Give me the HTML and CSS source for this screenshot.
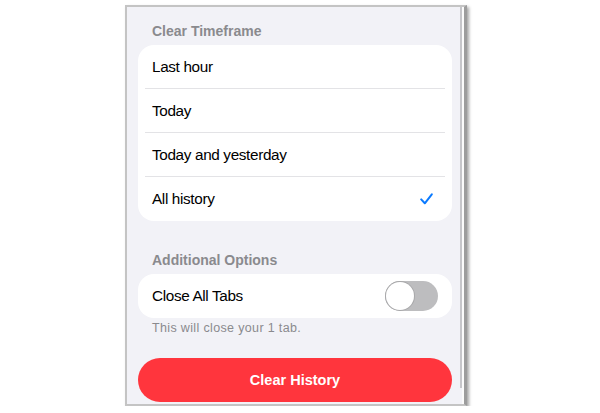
FILE: index.html
```html
<!DOCTYPE html>
<html lang="en">
<head>
    <meta charset="UTF-8">
    <title>Clear History</title>
    <link rel="stylesheet" href="styles.css">
</head>

<body>
    <!-- phone frame -->
    <div class="frame">
        <div class="screen">
            <!-- time range list -->
            <h3 class="section-title first">Clear Timeframe</h3>
            <ul class="group">
                <li class="row">Last hour</li>
                <li class="row">Today</li>
                <li class="row">Today and yesterday</li>
                <li class="row">
                    <span>All history</span>
                    <svg class="check" width="13" height="12" viewBox="0 0 13 12">
                        <polyline points="1.2,6.4 4.8,10.3 11.8,1.4" fill="none" stroke="#0a7aff" stroke-width="2" stroke-linecap="round" stroke-linejoin="round"/>
                    </svg>
                </li>
            </ul>

            <!-- extra options -->
            <h3 class="section-title">Additional Options</h3>
            <ul class="group">
                <li class="row">
                    <span>Close All Tabs</span>
                    <span class="toggle"><span class="knob"></span></span>
                </li>
            </ul>
            <p class="footnote">This will close your 1 tab.</p>

            <button type="button" class="clear-btn">Clear History</button>

            <span class="scroll-bar"></span>
        </div>
    </div>
</body>

</html>
```

FILE: styles.css
```css
/* page */
body {
    margin: 0;
    background-color: #ffffff;
    font-family: "Liberation Sans", Arial, sans-serif;
}

/* phone frame */
.frame {
    width: 335px;
    margin: 5px 0 0 125px;
    padding-right: 2px;
    background-color: #fbfbfb;
    border: 2px solid #c4c4c4;
    border-right: 3px solid #9d9d9d;
    box-shadow: 2px 2px 3px rgba(0, 0, 0, 0.35);
}

.screen {
    position: relative;
    height: 397px;
    padding: 0 10px 0 11px;
    background-color: #f2f2f7;
}

.scroll-bar {
    position: absolute;
    top: 0;
    right: 0;
    width: 2px;
    height: 381px;
    background-color: #c6c6ca;
}

/* section headers */
.section-title {
    margin: 30px 0 0;
    padding: 0 0 5px 14px;
    height: 18px;
    line-height: 18px;
    font-size: 14px;
    font-weight: bold;
    color: #8a8a8e;
}

.section-title.first {
    margin-top: 0;
    padding-top: 15px;
    padding-bottom: 5px;
}

/* grouped list */
.group {
    list-style-type: none;
    margin: 0;
    padding: 0;
    background-color: #ffffff;
    border-radius: 16px;
}

.row {
    display: flex;
    align-items: center;
    justify-content: space-between;
    height: 43px;
    margin: 0 7px;
    padding: 0 7px;
    font-size: 15.3px;
    letter-spacing: -0.35px;
    color: #000000;
    border-bottom: 1px solid #e3e3e6;
}

.row:last-child {
    height: 44px;
    border-bottom: none;
}

.check {
    margin-right: 5px;
}

/* switch, off */
.toggle {
    display: flex;
    width: 53px;
    height: 30px;
    padding: 1px;
    box-sizing: border-box;
    background-color: #bdbdbf;
    border-radius: 15px;
}

.knob {
    width: 28px;
    height: 28px;
    background-color: #ffffff;
    border-radius: 50%;
    box-shadow: 0 0 0 1px #a8a8aa;
}

.footnote {
    margin: 2px 0 0;
    padding-left: 14px;
    line-height: 16px;
    font-size: 12.5px;
    letter-spacing: 0.35px;
    color: #8a8a8e;
}

/* big red button */
.clear-btn {
    display: block;
    width: 100%;
    height: 44px;
    margin-top: 22px;
    border: none;
    border-radius: 22px;
    background-color: #ff353d;
    color: #ffffff;
    font-family: "Liberation Sans", Arial, sans-serif;
    font-size: 14.5px;
    font-weight: bold;
}
```
